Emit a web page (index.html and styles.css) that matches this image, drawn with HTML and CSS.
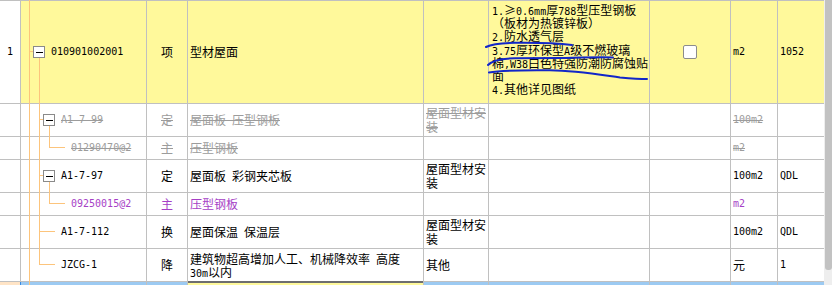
FILE: index.html
```html
<!DOCTYPE html>
<html lang="zh">
<head>
<meta charset="utf-8">
<title>清单</title>
<link rel="stylesheet" href="styles.css">
</head>
<body>
<div class="sheet">
  <div class="grid">
    <!-- row 1 -->
    <div class="c num"><span class="m">1</span></div>
    <div class="c y lv0"><span class="box"><i></i></span><span class="m">010901002001</span></div>
    <div class="c y ctr"><span>项</span></div>
    <div class="c y"><span>型材屋面</span></div>
    <div class="c y"></div>
    <div class="c y feat">
      <div class="ln"><span class="m">1.</span>≥<span class="m">0.6mm</span>厚<span class="m">788</span>型压型钢板</div>
      <div class="ln">（板材为热镀锌板）</div>
      <div class="ln"><span class="m">2.</span>防水透气层</div>
      <div class="ln"><span class="m">3.75</span>厚环保型<span class="m">A</span>级不燃玻璃</div>
      <div class="ln">棉<span class="m">,W38</span>白色特强防潮防腐蚀贴</div>
      <div class="ln">面</div>
      <div class="ln"><span class="m">4.</span>其他详见图纸</div>
    </div>
    <div class="c y ctr"><span class="chk"></span></div>
    <div class="c y"><span class="m">m2</span></div>
    <div class="c y"><span class="m">1052</span></div>

    <!-- row 2 -->
    <div class="c num"></div>
    <div class="c lv1 del"><span class="box"><i></i></span><span class="m">A1-7-99</span></div>
    <div class="c ctr del"><span>定</span></div>
    <div class="c del"><span>屋面板&ensp;压型钢板</span></div>
    <div class="c del"><div class="two"><div class="l14"><span>屋面型材安</span></div><div class="l14"><span>装</span></div></div></div>
    <div class="c"></div>
    <div class="c"></div>
    <div class="c del"><span class="m">100m2</span></div>
    <div class="c"></div>

    <!-- row 3 -->
    <div class="c num"></div>
    <div class="c lv2 del"><span class="m">01290470@2</span></div>
    <div class="c ctr del"><span>主</span></div>
    <div class="c del"><span>压型钢板</span></div>
    <div class="c"></div>
    <div class="c"></div>
    <div class="c"></div>
    <div class="c del"><span class="m">m2</span></div>
    <div class="c"></div>

    <!-- row 4 -->
    <div class="c num"></div>
    <div class="c lv1"><span class="box"><i></i></span><span class="m">A1-7-97</span></div>
    <div class="c ctr"><span>定</span></div>
    <div class="c"><span>屋面板&ensp;彩钢夹芯板</span></div>
    <div class="c"><div class="two"><div class="l14">屋面型材安</div><div class="l14">装</div></div></div>
    <div class="c"></div>
    <div class="c"></div>
    <div class="c"><span class="m">100m2</span></div>
    <div class="c"><span class="m">QDL</span></div>

    <!-- row 5 -->
    <div class="c num"></div>
    <div class="c lv2 pur"><span class="m">09250015@2</span></div>
    <div class="c ctr pur"><span>主</span></div>
    <div class="c pur"><span>压型钢板</span></div>
    <div class="c"></div>
    <div class="c"></div>
    <div class="c"></div>
    <div class="c pur"><span class="m">m2</span></div>
    <div class="c"></div>

    <!-- row 6 -->
    <div class="c num"></div>
    <div class="c leaf"><span class="m">A1-7-112</span></div>
    <div class="c ctr"><span>换</span></div>
    <div class="c"><span>屋面保温&ensp;保温层</span></div>
    <div class="c"><div class="two"><div class="l14">屋面型材安</div><div class="l14">装</div></div></div>
    <div class="c"></div>
    <div class="c"></div>
    <div class="c"><span class="m">100m2</span></div>
    <div class="c"><span class="m">QDL</span></div>

    <!-- row 7 -->
    <div class="c num"></div>
    <div class="c leaf"><span class="m">JZCG-1</span></div>
    <div class="c ctr"><span>降</span></div>
    <div class="c"><div class="two"><div class="l13">建筑物超高增加人工、机械降效率&ensp;高度</div><div class="l13"><span class="m">30m</span>以内</div></div></div>
    <div class="c"><span>其他</span></div>
    <div class="c"></div>
    <div class="c"></div>
    <div class="c"><span>元</span></div>
    <div class="c"><span class="m">1</span></div>

    <!-- row 8 (selected, partly visible) -->
    <div class="c sel-num"></div>
    <div class="c sel"></div>
    <div class="c sel"></div>
    <div class="c focus"></div>
    <div class="c sel"></div>
    <div class="c sel"></div>
    <div class="c sel"></div>
    <div class="c sel"></div>
    <div class="c sel"></div>
  </div>
  <div class="scroll"><div class="thumb"></div></div>

  <svg class="overlay" width="832" height="285" viewBox="0 0 832 285" xmlns="http://www.w3.org/2000/svg">
    <g stroke="#fcc47c" stroke-width="1" fill="none" shape-rendering="crispEdges">
      <path d="M29.5,0 V285"/>
      <path d="M29,51.5 H33"/>
      <path d="M39.5,58 V264.5"/>
      <path d="M39,119.5 H43"/>
      <path d="M49.5,126 V147.5 H65"/>
      <path d="M39,175.5 H43"/>
      <path d="M49.5,182 V203.5 H65"/>
      <path d="M39,231.5 H55"/>
      <path d="M39,264.5 H55"/>
    </g>
    <g stroke="#1226c8" stroke-width="2" fill="none" stroke-linecap="round" stroke-linejoin="round">
      <path d="M486,47 C492,44 500,43 515,42.8 C540,42.5 560,43.5 572,45"/>
      <path d="M488,65 C492,60.5 500,58.5 515,58.2 L560,58 C585,57.5 600,57 613,57.5"/>
      <path d="M489,72.5 C500,70.5 520,70 550,70.3 C575,70.6 595,74 620,77.5 C632,78.5 640,79 647,79"/>
    </g>
  </svg>
</div>
</body>
</html>
```

FILE: styles.css
```css
html, body {
  margin: 0;
  padding: 0;
}

body {
  width: 832px;
  height: 285px;
  overflow: hidden;
  background: #ffffff;
  color: #000000;
  font-family: "Noto Sans CJK SC", "Noto Sans", sans-serif;
  font-size: 12px;
}

.sheet {
  position: relative;
  display: flex;
  width: 832px;
  height: 285px;
  overflow: hidden;
}

.grid {
  flex: none;
  width: 824px;
  display: grid;
  grid-template-columns: 20px 125px 40px 235px 64px 160px 80px 46px 46px;
  grid-template-rows: 102px 32px 22px 32px 22px 32px 32px 22px;
  gap: 1px;
  padding-top: 1px;
  align-content: start;
  background: #c0c0c0;
}

.c {
  background: #ffffff;
  display: flex;
  align-items: center;
  padding-left: 2px;
  line-height: 14px;
  white-space: nowrap;
  overflow: hidden;
  min-width: 0;
}

.y {
  background: #fff99b;
}

.num,
.ctr {
  justify-content: center;
  padding-left: 0;
}

.m {
  font-family: "DejaVu Sans Mono", "Liberation Mono", monospace;
  font-size: 10px;
  line-height: 10px;
}

.del {
  color: #9c9c9c;
}

.del span {
  text-decoration: line-through;
}

.pur {
  color: #a63fc6;
}

/* tree column indentation */
.lv0 { padding-left: 12px; }
.lv1 { padding-left: 22px; }
.leaf { padding-left: 40px; }
.lv2 { padding-left: 50px; }

.box {
  flex: none;
  box-sizing: border-box;
  width: 12px;
  height: 12px;
  margin-right: 6px;
  border: 1px solid #8a8a8a;
  background: #ffffff;
  display: flex;
  align-items: center;
  justify-content: center;
}

.box i {
  display: block;
  width: 7px;
  height: 1px;
  background: #000000;
}

/* two-line cells */
.two {
  display: flex;
  flex-direction: column;
}

.l14 {
  height: 14px;
  line-height: 14px;
}

.l13 {
  height: 13px;
  line-height: 13px;
}

/* feature description */
.feat {
  flex-direction: column;
  align-items: flex-start;
  padding-left: 3px;
  padding-top: 2px;
}

.ln {
  height: 13.2px;
  line-height: 13.2px;
}

.chk {
  box-sizing: border-box;
  width: 14px;
  height: 14px;
  border: 1px solid #8c8c8c;
  border-radius: 2px;
  background: #ffffff;
}

/* selected row */
.sel-num {
  background: #ffe4c6;
  box-shadow: 1px 0 0 #3a8ce6;
}

.sel {
  background: #9ccaf2;
}

.focus {
  background: #fff99b;
  box-shadow: 0 -1px 0 #6e6e6e, inset 0 1px 0 #6e6e6e;
}

/* scrollbar */
.scroll {
  flex: none;
  width: 8px;
  height: 285px;
  background: #eeeeee;
  display: flex;
  justify-content: flex-end;
}

.thumb {
  width: 7px;
  height: 270px;
  background: #c2c2c2;
  border-radius: 0 0 3px 3px;
}

.overlay {
  position: absolute;
  left: 0;
  top: 0;
  pointer-events: none;
}
```
